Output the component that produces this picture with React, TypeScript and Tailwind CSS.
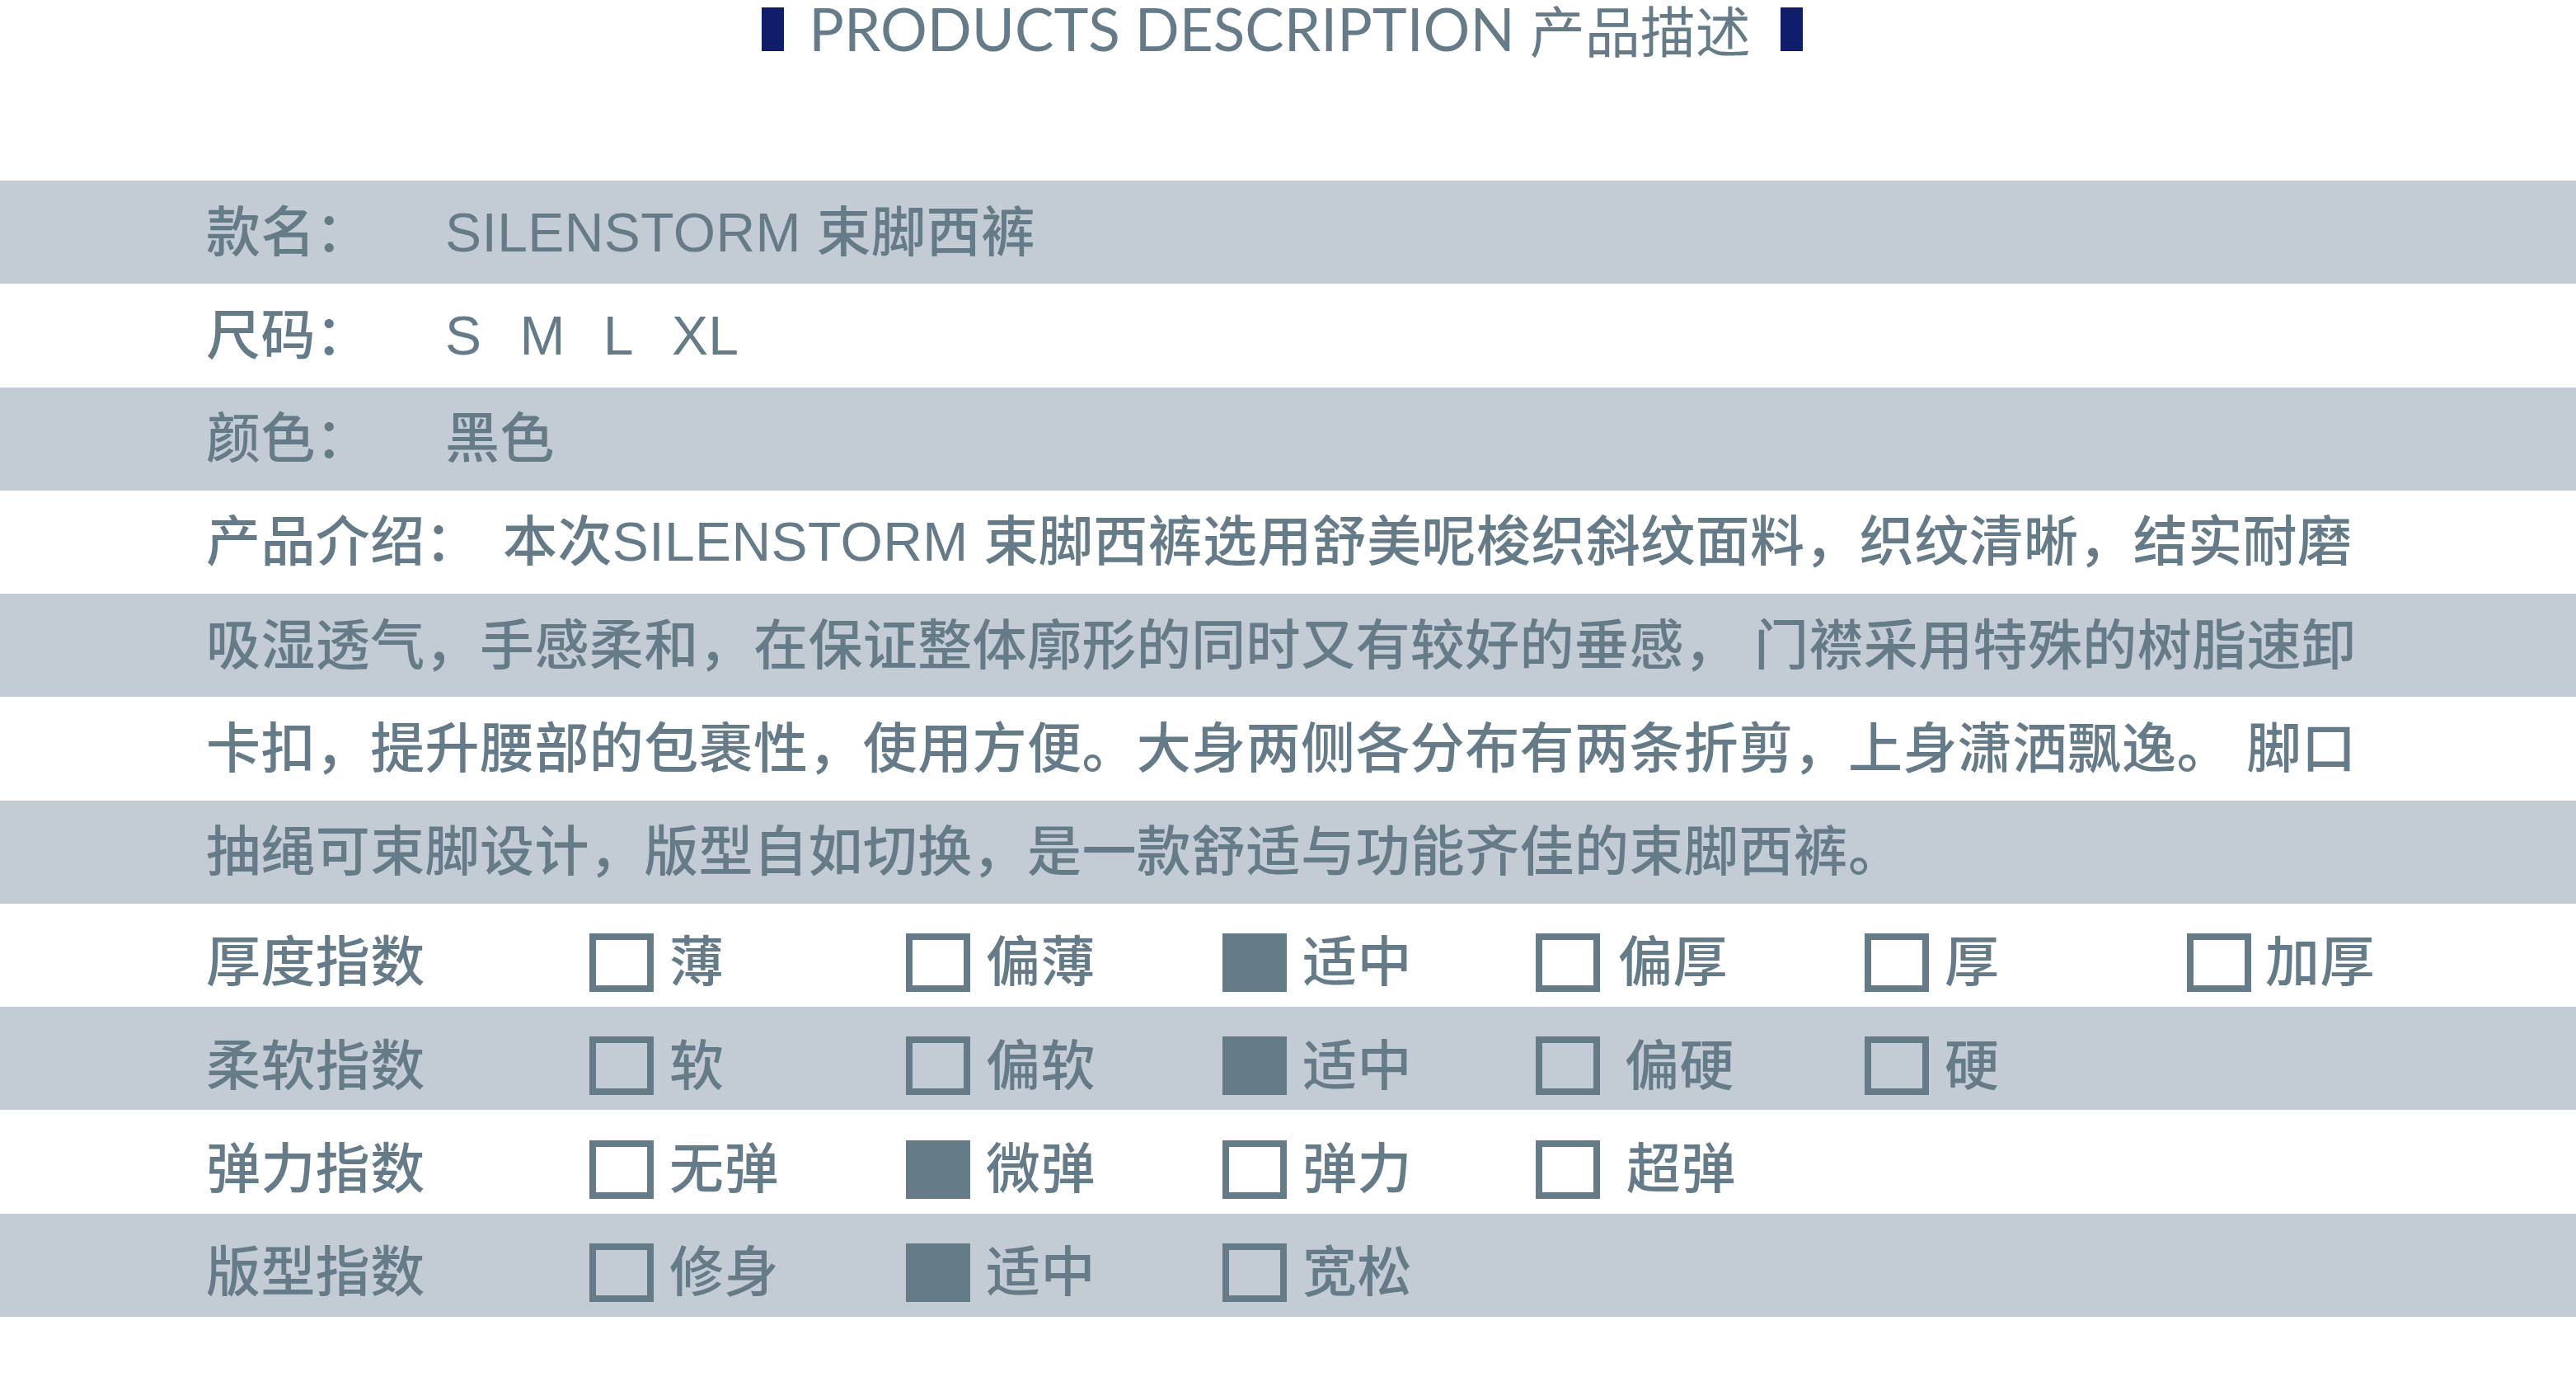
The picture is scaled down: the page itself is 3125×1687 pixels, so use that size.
import React from "react";

const FONT = { fontFamily: '"Liberation Sans", "Noto Sans CJK SC", sans-serif' };

function Row({ gray, children, extra }: { gray: boolean; children: React.ReactNode; extra?: string }) {
  return (
    <div
      className={
        (gray ? "bg-[#c3cbd4] " : "bg-white ") +
        "h-[125.27px] flex items-center pl-[250px] whitespace-nowrap " +
        (extra ?? "")
      }
    >
      {children}
    </div>
  );
}

function Opt({ label, on, gapClass }: { label: string; on?: boolean; gapClass?: string }) {
  return (
    <div className="flex items-center">
      <span
        className={
          "box-border block w-[78px] h-[71px] shrink-0 " +
          (on ? "bg-[#667b88]" : "border-[8px] border-[#667b88]")
        }
      />
      <span className={gapClass ?? "ml-[19px]"}>{label}</span>
    </div>
  );
}

function OptRow({ gray, title, items }: { gray: boolean; title: string; items: React.ReactNode[] }) {
  return (
    <div
      className={
        (gray ? "bg-[#c3cbd4] " : "bg-white ") +
        "h-[125.27px] pl-[250px] pt-[18px] grid grid-cols-[465px_384px_384px_380px_399px_391px_1fr] items-center whitespace-nowrap"
      }
    >
      <span>{title}</span>
      {items.map((it, i) => (
        <div key={i}>{it}</div>
      ))}
    </div>
  );
}

export default function App() {
  return (
    <div className="w-full min-h-screen bg-white text-[#667b88]" style={FONT}>
      {/* Title */}
      <div className="h-[219px] flex justify-center items-start pr-[14px]">
        <div className="flex items-center h-[70px]">
          <span className="block w-[27px] h-[53px] bg-[#0f1d6a]" />
          <span
            className="ml-[30px] text-[71px] leading-[70px]"
            style={{ fontFamily: 'Lato, "Noto Sans CJK SC", sans-serif' }}
          >
            PRODUCTS DESCRIPTION
          </span>
          <span
            className="ml-[18px] text-[67px] leading-[70px] font-normal"
            style={{ fontFamily: '"Noto Sans CJK SC", sans-serif' }}
          >
            产品描述
          </span>
          <span className="block w-[27px] h-[53px] ml-[36px] bg-[#0f1d6a]" />
        </div>
      </div>

      <div className="text-[66px] leading-none tracking-[0.4px] font-medium">
        <Row gray>
          <span className="w-[290px] shrink-0">款名：</span>
          <span>SILENSTORM 束脚西裤</span>
        </Row>
        <Row gray={false}>
          <span className="w-[290px] shrink-0">尺码：</span>
          <span className="flex gap-[46px]">
            <span>S</span>
            <span>M</span>
            <span>L</span>
            <span>XL</span>
          </span>
        </Row>
        <Row gray>
          <span className="w-[290px] shrink-0">颜色：</span>
          <span>黑色</span>
        </Row>
        <Row gray={false}>
          <span>产品介绍：</span>
          <span className="ml-[28px]">本次SILENSTORM 束脚西裤选用舒美呢梭织斜纹面料，织纹清晰，结实耐磨</span>
        </Row>
        <Row gray>
          <span>吸湿透气，手感柔和，在保证整体廓形的同时又有较好的垂感， 门襟采用特殊的树脂速卸</span>
        </Row>
        <Row gray={false}>
          <span>卡扣，提升腰部的包裹性，使用方便。大身两侧各分布有两条折剪，上身潇洒飘逸。 脚口</span>
        </Row>
        <Row gray>
          <span>抽绳可束脚设计，版型自如切换，是一款舒适与功能齐佳的束脚西裤。</span>
        </Row>

        <OptRow
          gray={false}
          title="厚度指数"
          items={[
            <Opt label="薄" />,
            <Opt label="偏薄" />,
            <Opt label="适中" on />,
            <Opt label="偏厚" gapClass="ml-[22px]" />,
            <Opt label="厚" />,
            <Opt label="加厚" gapClass="ml-[17px]" />,
          ]}
        />
        <OptRow
          gray
          title="柔软指数"
          items={[
            <Opt label="软" />,
            <Opt label="偏软" />,
            <Opt label="适中" on />,
            <Opt label="偏硬" gapClass="ml-[30px]" />,
            <Opt label="硬" />,
          ]}
        />
        <OptRow
          gray={false}
          title="弹力指数"
          items={[
            <Opt label="无弹" />,
            <Opt label="微弹" on />,
            <Opt label="弹力" />,
            <Opt label="超弹" gapClass="ml-[32px]" />,
          ]}
        />
        <OptRow
          gray
          title="版型指数"
          items={[<Opt label="修身" />, <Opt label="适中" on />, <Opt label="宽松" />]}
        />
      </div>
    </div>
  );
}
